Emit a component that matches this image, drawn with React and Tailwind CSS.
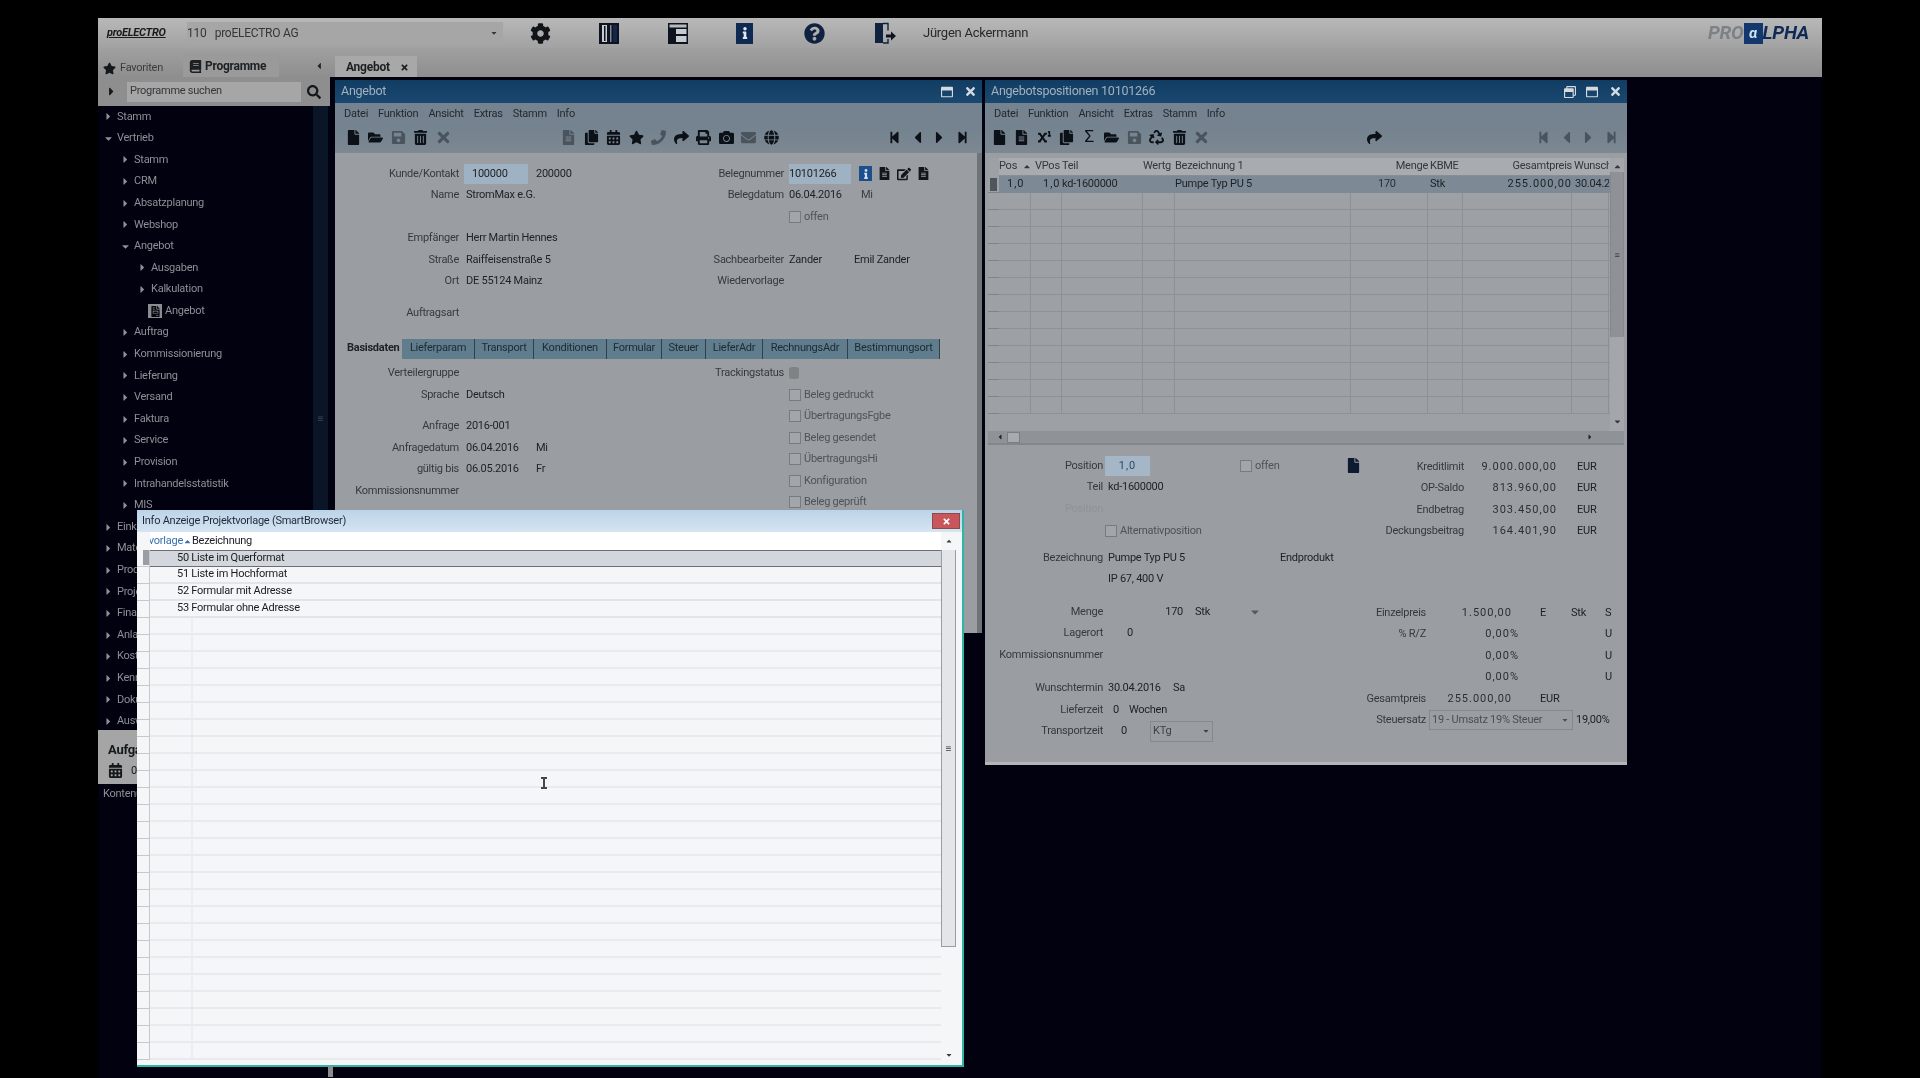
import {
  FaCog, FaInfo, FaQuestionCircle, FaStar, FaSearch, FaCaretRight, FaCaretDown, FaCaretLeft,
  FaCaretUp, FaFile, FaFolderOpen, FaSave, FaTrashAlt, FaTimes, FaFileAlt, FaCalendarAlt, FaPhone, FaPrint, FaEnvelope, FaGlobe,
  FaStepBackward, FaStepForward, FaShare, FaCopy, FaCamera, FaBook, FaFileInvoice, FaSuperscript, FaRegWindowRestore, FaRegWindowMaximize,
  FaEdit, FaRecycle,
} from 'react-icons/fa';

const tree = [
  [0, 'Stamm', 'r'], [0, 'Vertrieb', 'd'], [1, 'Stamm', 'r'], [1, 'CRM', 'r'], [1, 'Absatzplanung', 'r'], [1, 'Webshop', 'r'],
  [1, 'Angebot', 'd'], [2, 'Ausgaben', 'r'], [2, 'Kalkulation', 'r'], [2, 'Angebot', 'i'], [1, 'Auftrag', 'r'],
  [1, 'Kommissionierung', 'r'], [1, 'Lieferung', 'r'], [1, 'Versand', 'r'], [1, 'Faktura', 'r'], [1, 'Service', 'r'],
  [1, 'Provision', 'r'], [1, 'Intrahandelsstatistik', 'r'], [1, 'MIS', 'r'], [0, 'Einkauf', 'r'], [0, 'Material', 'r'],
  [0, 'Produktion', 'r'], [0, 'Projekt', 'r'], [0, 'Finanzen', 'r'], [0, 'Anlagen', 'r'], [0, 'Kosten', 'r'],
  [0, 'Kennzahlen', 'r'], [0, 'Dokumente', 'r'], [0, 'Auswertungen', 'r'],
];

const menus = ['Datei', 'Funktion', 'Ansicht', 'Extras', 'Stamm', 'Info'];
const tabs = [
  ['Lieferparam', 'w-[73px]'], ['Transport', 'w-[59px]'], ['Konditionen', 'w-[73px]'], ['Formular', 'w-[55px]'],
  ['Steuer', 'w-[44px]'], ['LieferAdr', 'w-[57px]'], ['RechnungsAdr', 'w-[85px]'], ['Bestimmungsort', 'w-[92px]'],
];
const gridCols = 'grid grid-cols-[32px_31px_81px_32px_176px_77px_35px_109px_37px] whitespace-nowrap';

const BookIcon = () => (
  <svg width="20" height="21" viewBox="0 0 20 21">
    <rect width="20" height="21" fill="#0d1420" />
    <rect x="3" y="2" width="5" height="17" fill="#c8ccd0" />
    <rect x="5" y="3" width="1.5" height="15" fill="#0d1420" />
    <rect x="11" y="2" width="1.5" height="17" fill="#7f8790" />
    <rect x="14" y="2" width="4" height="17" fill="#14264a" />
  </svg>
);

const LayoutIcon = () => (
  <svg width="20" height="21" viewBox="0 0 20 21">
    <rect width="20" height="21" fill="#0d1420" />
    <rect x="1.5" y="1.5" width="17" height="3" fill="#b7bbc0" />
    <rect x="1.5" y="6" width="5" height="13" fill="#0d1420" />
    <rect x="8" y="6" width="10.5" height="5" fill="#c8ccd0" />
    <rect x="8" y="13" width="10.5" height="6" fill="#c8ccd0" />
  </svg>
);

const ExitIcon = () => (
  <svg width="22" height="22" viewBox="0 0 22 22">
    <rect x="1" y="1" width="8" height="20" fill="#0f2240" />
    <path d="M9 1.5h5v7M14 17v4H9" fill="none" stroke="#0f2240" strokeWidth="1.4" />
    <path d="M12 12.5h5V9.5l5 4.5-5 4.5v-3h-5z" fill="#0d1420" />
  </svg>
);

const TreeRow = ({ level, label, kind }) => (
  <div className={`flex h-[21.6px] items-center text-[#8d9094] ${level === 0 ? 'pl-[5px]' : level === 1 ? 'pl-[22px]' : 'pl-[39px]'}`}>
    {kind === 'i' ? (
      <span className="ml-[11px] mr-[3px] flex h-[14px] w-[14px] items-center justify-center bg-[#8a8d90] text-[#05050f]">
        <FaFileInvoice size={11} />
      </span>
    ) : (
      <span className="flex w-[14px] justify-start">
        {kind === 'd' ? <FaCaretDown size={11} /> : <FaCaretRight size={11} />}
      </span>
    )}
    <span>{label}</span>
  </div>
);

const Tool = ({ icon: Icon, size = 15, dim }) => (
  <span className={`flex h-[20px] w-[22.5px] shrink-0 items-center justify-center ${dim ? 'text-[#4a545d]' : 'text-[#0c1118]'}`}>
    <Icon size={size} />
  </span>
);

const WindowHead = ({ title, restore }) => (
  <>
    <div className="flex h-[23px] items-center bg-gradient-to-b from-[#123d63] to-[#1a4870] pl-[6px] pr-[5px] text-[12.5px] text-[#a3b1bd]">
      <span className="flex-1">{title}</span>
      {restore && <FaRegWindowRestore size={12} className="mr-[10px] text-[#d4dae0]" />}
      <FaRegWindowMaximize size={12} className="mr-[11px] text-[#d4dae0]" />
      <FaTimes size={13} className="text-[#d4dae0]" />
    </div>
    <div className="flex h-[24px] items-center gap-[10px] bg-[#74838f] pb-[1px] pl-[9px] text-[#24292e]">
      {menus.map((m) => <span key={m}>{m}</span>)}
    </div>
  </>
);

const Check = ({ label }) => (
  <span className="flex items-center gap-[3px] text-[#4f5357]">
    <span className="h-[12px] w-[12px] border border-[#777b80] bg-[#a2a6aa]" />
    {label}
  </span>
);

const Row = ({ label, children, rlabel, right }) => (
  <div className="flex h-[21.5px] items-center">
    <div className="w-[124px] shrink-0 text-right text-[#36393c]">{label}</div>
    <div className="flex w-[206px] shrink-0 items-center pl-[7px]">{children}</div>
    <div className="w-[119px] shrink-0 text-right text-[#36393c]">{rlabel}</div>
    <div className="flex items-center pl-[5px]">{right}</div>
  </div>
);

const Label = ({ w, children }) => <span className={`${w} shrink-0 text-right text-[#36393c]`}>{children}</span>;

const PosRow = ({ label, children, dim }) => (
  <div className="flex h-[21.5px] items-center">
    <div className={`w-[118px] shrink-0 text-right ${dim ? 'text-[#8f9397]' : 'text-[#36393c]'}`}>{label}</div>
    <div className="flex flex-1 items-center pl-[5px]">{children}</div>
  </div>
);

const Amount = ({ label, value }) => (
  <div className="flex h-[21.5px] items-center">
    <Label w="w-[114px]">{label}</Label>
    <span className="w-[93px] text-right tracking-[1px] text-[#2c2f32]">{value}</span>
    <span className="ml-[20px]">EUR</span>
  </div>
);

const Price = ({ label, value, a, b, c, wide }) => (
  <div className="flex h-[21.5px] items-center">
    <Label w="w-[76px]">{label}</Label>
    <span className={`${wide ? 'w-[93px]' : 'w-[86px]'} shrink-0 text-right tracking-[1px] text-[#2c2f32]`}>{value}</span>
    <span className={`${wide ? 'w-[52px] pl-[21px]' : 'w-[59px] pl-[28px]'} shrink-0`}>{a}</span>
    <span className="w-[34px] shrink-0">{b}</span>
    <span>{c}</span>
  </div>
);

const Angebot = () => (
  <div className="flex h-[553px] w-[647px] shrink-0 flex-col overflow-hidden bg-[#9a9ea2] text-[#202326]">
    <WindowHead title="Angebot" />
    <div className="flex h-[26px] items-start bg-gradient-to-b from-[#74838f] to-[#7c8892] pl-[7px]">
      {[FaFile, FaFolderOpen].map((I, i) => <Tool key={i} icon={I} />)}
      <Tool icon={FaSave} dim />
      <Tool icon={FaTrashAlt} />
      <Tool icon={FaTimes} dim size={17} />
      <span className="w-[103px]" />
      <Tool icon={FaFileAlt} dim />
      <Tool icon={FaCopy} />
      <Tool icon={FaCalendarAlt} />
      <Tool icon={FaStar} />
      <Tool icon={FaPhone} dim />
      <Tool icon={FaShare} />
      <Tool icon={FaPrint} />
      <Tool icon={FaCamera} />
      <Tool icon={FaEnvelope} dim />
      <Tool icon={FaGlobe} />
      <span className="w-[101px]" />
      <Tool icon={FaStepBackward} size={13} />
      <Tool icon={FaCaretLeft} size={19} />
      <Tool icon={FaCaretRight} size={19} />
      <Tool icon={FaStepForward} size={13} />
    </div>
    <div className="flex flex-1 border-r-[5px] border-[#6f7478]">
      <div className="flex-1 pt-[10px]">
        <Row label="Kunde/Kontakt" rlabel="Belegnummer" right={
          <>
            <span className="h-[20px] w-[62px] bg-[#9fb2c3] leading-[20px]">10101266</span>
            <span className="ml-[8px] flex items-center gap-[6px]">
              <span className="flex h-[15px] w-[13px] items-center justify-center bg-[#1d4f8c] text-[#cfe0f0]"><FaInfo size={10} /></span>
              <FaFileAlt size={13} className="text-[#11161b]" />
              <FaEdit size={14} className="text-[#11161b]" />
              <FaFileAlt size={13} className="text-[#11161b]" />
            </span>
          </>
        }>
          <span className="-ml-[2px] h-[20px] w-[64px] bg-[#9fb2c3] pl-[8px] leading-[20px]">100000</span>
          <span className="ml-[8px]">200000</span>
        </Row>
        <Row label="Name" rlabel="Belegdatum" right={<><span className="w-[72px]">06.04.2016</span><span className="text-[#3a3e42]">Mi</span></>}>StromMax e.G.</Row>
        <Row right={<Check label="offen" />} />
        <Row label="Empfänger">Herr Martin Hennes</Row>
        <Row label="Straße" rlabel="Sachbearbeiter" right={<><span className="w-[65px]">Zander</span><span>Emil Zander</span></>}>Raiffeisenstraße 5</Row>
        <Row label="Ort" rlabel="Wiedervorlage">DE 55124 Mainz</Row>
        <div className="mt-[10px]"><Row label="Auftragsart" /></div>
        <div className="mt-[14px] flex h-[22px] items-center pl-[12px]">
          <span className="w-[55px] whitespace-nowrap font-bold text-[#202326]">Basisdaten</span>
          {tabs.map(([t, w]) => (
            <span key={t} className={`${w} flex h-[20px] items-center justify-center border-r border-[#33404a] bg-[#5f7d8c] text-[#1c2a33]`}>{t}</span>
          ))}
        </div>
        <div className="mt-[3px] flex">
          <div className="w-[449px] shrink-0">
            <Row label="Verteilergruppe" />
            <Row label="Sprache">Deutsch</Row>
            <div className="mt-[10px]"><Row label="Anfrage">2016-001</Row></div>
            <Row label="Anfragedatum"><span className="w-[70px]">06.04.2016</span><span>Mi</span></Row>
            <Row label="gültig bis"><span className="w-[70px]">06.05.2016</span><span>Fr</span></Row>
            <Row label="Kommissionsnummer" />
          </div>
          <div className="pl-[5px]">
            <div className="flex h-[21.5px] items-center">
              <span className="-ml-[125px] w-[120px] text-right text-[#36393c]">Trackingstatus</span>
              <span className="ml-[5px] h-[12px] w-[10px] rounded-[3px] bg-[#7f8386]" />
            </div>
            {['Beleg gedruckt', 'ÜbertragungsFgbe', 'Beleg gesendet', 'ÜbertragungsHi', 'Konfiguration', 'Beleg geprüft'].map((t) => (
              <div key={t} className="flex h-[21.5px] items-center"><Check label={t} /></div>
            ))}
          </div>
        </div>
      </div>
    </div>
  </div>
);

const Positionen = () => (
  <div className="flex h-[685px] w-[642px] shrink-0 flex-col overflow-hidden border-b-[3px] border-[#b3b6b9] bg-[#9a9ea2] text-[#202326]">
    <WindowHead title="Angebotspositionen 10101266" restore />
    <div className="flex h-[26px] items-start bg-gradient-to-b from-[#74838f] to-[#7c8892] pl-[3px]">
      <Tool icon={FaFile} /><Tool icon={FaFileAlt} /><Tool icon={FaSuperscript} size={13} /><Tool icon={FaCopy} />
      <span className="flex h-[20px] w-[22.5px] items-center justify-center text-[17px] text-[#0c1118]">Σ</span>
      <Tool icon={FaFolderOpen} /><Tool icon={FaSave} dim /><Tool icon={FaRecycle} /><Tool icon={FaTrashAlt} /><Tool icon={FaTimes} dim size={17} />
      <span className="w-[150px]" />
      <Tool icon={FaShare} />
      <span className="w-[147px]" />
      <Tool icon={FaStepBackward} size={13} dim /><Tool icon={FaCaretLeft} size={19} dim /><Tool icon={FaCaretRight} size={19} dim /><Tool icon={FaStepForward} size={13} dim />
    </div>
    <div className="mx-[3px] mt-[5px] flex h-[287px] flex-col border-b-2 border-[#82878b] bg-[#9da1a5]">
      <div className="flex flex-1">
        <div className="flex w-[11px] flex-col pt-[18px]">
          {Array.from({ length: 14 }, (_, i) => (
            <div key={i} className="h-[17px] border-b border-[#7e8387] pl-[2px]">
              {i === 0 && <span className="mt-[2px] block h-[13px] w-[7px] bg-[#4e555c]" />}
            </div>
          ))}
        </div>
        <div className="flex-1">
          <div className={`${gridCols} h-[18px] items-center border-b border-[#898d91] bg-[#a8acb0] text-[#33373b]`}>
            <span className="flex items-center gap-[6px]">Pos <FaCaretUp size={9} /></span>
            <span className="pl-[4px]">VPos</span>
            <span>Teil</span>
            <span>Wertg</span>
            <span>Bezeichnung 1</span>
            <span className="text-right">Menge</span>
            <span className="pl-[2px]">KBME</span>
            <span className="text-right">Gesamtpreis</span>
            <span className="overflow-hidden pl-[2px]">Wunscht</span>
          </div>
          <div className={`${gridCols} h-[17px] items-center bg-[#7d8a96] text-[#1d2023]`}>
            <span className="pl-[8px] tracking-[1px]">1,0</span>
            <span className="pl-[12px] tracking-[1px]">1,0</span>
            <span>kd-1600000</span>
            <span />
            <span>Pumpe Typ PU 5</span>
            <span className="pl-[27px] text-[#2c2f32]">170</span>
            <span className="pl-[2px]">Stk</span>
            <span className="text-right tracking-[1px]">255.000,00</span>
            <span className="overflow-hidden pl-[3px]">30.04.2016</span>
          </div>
          {Array.from({ length: 13 }, (_, i) => (
            <div key={i} className={`${gridCols} h-[17px] border-b border-[#8d9195]`}>
              {Array.from({ length: 9 }, (_, c) => <span key={c} className="border-r border-[#8d9195]" />)}
            </div>
          ))}
        </div>
        <div className="flex w-[14px] flex-col items-center bg-[#a3a7ab] text-[#33373b]">
          <FaCaretUp size={9} className="mt-[4px]" />
          <div className="mt-[1px] flex h-[165px] w-full flex-col items-center justify-center border-x border-[#85898d] bg-[#8e9296] text-[9px] leading-[4px]">≡</div>
          <div className="flex-1" />
          <FaCaretDown size={9} className="mb-[5px]" />
        </div>
      </div>
      <div className="flex h-[12px] items-center bg-[#8f9397] pl-[8px]">
        <FaCaretLeft size={8} />
        <span className="ml-[3px] h-[11px] w-[13px] border border-[#7a7e82] bg-[#a7abaf]" />
        <FaCaretRight size={8} className="ml-[566px]" />
      </div>
    </div>
    <div className="flex flex-1 pt-[10px]">
      <div className="w-[365px] shrink-0">
        <PosRow label="Position">
          <span className="-ml-[3px] h-[20px] w-[45px] bg-[#a5b6c6] text-center leading-[20px] tracking-[1px] text-[#2e4a66]">1,0</span>
          <span className="ml-[90px] w-[106px]"><Check label="offen" /></span>
          <FaFile size={15} className="text-[#0d1a30]" />
        </PosRow>
        <PosRow label="Teil">kd-1600000</PosRow>
        <PosRow label="Position" dim />
        <div className="mt-[1px]">
          <PosRow><span className="-ml-[3px]"><Check label="Alternativposition" /></span></PosRow>
        </div>
        <div className="mt-[5px]">
          <PosRow label="Bezeichnung"><span className="w-[172px]">Pumpe Typ PU 5</span><span>Endprodukt</span></PosRow>
        </div>
        <PosRow>IP 67, 400 V</PosRow>
        <div className="mt-[11px]">
          <PosRow label="Menge">
            <span className="w-[75px] text-right">170</span>
            <span className="ml-[12px] w-[54px]">Stk</span>
            <FaCaretDown size={12} className="text-[#555a5f]" />
          </PosRow>
        </div>
        <PosRow label="Lagerort"><span className="pl-[19px]">0</span></PosRow>
        <PosRow label="Kommissionsnummer" />
        <div className="mt-[12px]">
          <PosRow label="Wunschtermin"><span className="w-[65px]">30.04.2016</span><span>Sa</span></PosRow>
        </div>
        <PosRow label="Lieferzeit"><span className="pl-[5px]">0</span><span className="ml-[10px]">Wochen</span></PosRow>
        <PosRow label="Transportzeit">
          <span className="w-[42px] pl-[13px]">0</span>
          <span className="flex h-[21px] w-[63px] items-center justify-between border border-[#85898d] pl-[2px] pr-[2px] text-[#3e4246]">KTg <FaCaretDown size={8} /></span>
        </PosRow>
      </div>
      <div className="flex-1 pt-[1px]">
        <Amount label="Kreditlimit" value="9.000.000,00" />
        <Amount label="OP-Saldo" value="813.960,00" />
        <Amount label="Endbetrag" value="303.450,00" />
        <Amount label="Deckungsbeitrag" value="164.401,90" />
        <div className="mt-[60px]">
          <Price label="Einzelpreis" value="1.500,00" a="E" b="Stk" c="S" />
          <Price label="% R/Z" value="0,00%" c="U" wide />
          <Price value="0,00%" c="U" wide />
          <Price value="0,00%" c="U" wide />
          <Price label="Gesamtpreis" value="255.000,00" a="EUR" />
          <div className="flex h-[21.5px] items-center">
            <Label w="w-[76px]">Steuersatz</Label>
            <span className="ml-[3px] flex h-[20px] w-[144px] items-center justify-between border border-[#85898d] pl-[2px] pr-[3px] text-[#4b4f53]">19 - Umsatz 19% Steuer <FaCaretDown size={8} /></span>
            <span className="ml-[3px]">19,00%</span>
          </div>
        </div>
      </div>
    </div>
  </div>
);

const Dialog = () => (
  <div className="absolute left-[39px] top-[492px] flex h-[557px] w-[827px] flex-col overflow-hidden border-b-2 border-r-2 border-[#2fb5a8] bg-[#f5f6f8] text-[#1a1c1f]">
    <div className="flex h-[22px] shrink-0 items-center bg-gradient-to-b from-[#bcd3e8] to-[#d5e4f1] pl-[5px] text-[#1d2a38]">
      <span className="flex-1">Info Anzeige Projektvorlage (SmartBrowser)</span>
      <span className="mr-[2px] flex h-[16px] w-[28px] items-center justify-center border border-[#8c4a4a] bg-[#c9565a] text-white"><FaTimes size={9} /></span>
    </div>
    <div className="flex min-h-0 flex-1 pr-[6px]">
      <div className="w-[13px] shrink-0 overflow-hidden pt-[18px]">
        {Array.from({ length: 30 }, (_, i) => (
          <div key={i} className="h-[17px] border-b border-r border-[#c6c8cc]">
            {i === 0 && <span className="ml-[6px] block h-[15px] w-[6px] bg-[#9a9ea3]" />}
          </div>
        ))}
      </div>
      <div className="min-w-0 flex-1 overflow-hidden">
        <div className="flex h-[18px] items-center bg-white">
          <span className="w-[33px] overflow-hidden whitespace-nowrap text-right text-[#3b6fae]" dir="rtl">vorlage</span>
          <FaCaretUp size={9} className="text-[#3b6fae]" />
          <span>Bezeichnung</span>
        </div>
        {['50 Liste im Querformat', '51 Liste im Hochformat', '52 Formular mit Adresse', '53 Formular ohne Adresse'].map((t, i) => (
          <div key={t} className={`flex h-[17px] items-center pl-[27px] ${i === 0 ? 'border-y border-[#6b7077] bg-[#d3d7dd]' : 'border-b-2 border-[#e2e4e8]'}`}>{t}</div>
        ))}
        {Array.from({ length: 26 }, (_, i) => (
          <div key={i} className="h-[17px] border-b-2 border-[#e8eaed]">
            <div className="ml-[41px] h-full border-l-2 border-[#ebedf0]" />
          </div>
        ))}
      </div>
      <div className="flex w-[15px] shrink-0 flex-col items-center text-[#3a3d40]">
        <div className="flex h-[18px] items-center"><FaCaretUp size={8} /></div>
        <div className="flex h-[397px] w-full items-center justify-center border-x border-b border-[#9a9da1] bg-[#e4e5e8] text-[10px]">≡</div>
        <div className="flex-1" />
        <FaCaretDown size={8} className="mb-[6px]" />
      </div>
    </div>
    <span className="absolute left-[404px] top-[267px] h-[12px] w-[6px] border-y-2 border-[#44484d]">
      <span className="mx-auto block h-full w-[2px] bg-[#44484d]" />
    </span>
  </div>
);

export default function App() {
  return (
    <div className="h-[1078px] w-[1920px] overflow-hidden bg-black pl-[98px] pt-[18px] font-['Roboto',sans-serif] text-[11px] tracking-[-0.25px] blur-[0.5px]">
      <div className="relative flex h-[1060px] w-[1724px] flex-col bg-[#01010f]">
        <div className="flex h-[30px] shrink-0 items-center bg-gradient-to-b from-[#b8b8b8] to-[#a2a2a2] text-[#1a1a1a]">
          <span className="ml-[9px] w-[80px] text-[11px] font-bold italic underline">proELECTRO</span>
          <span className="flex h-[22px] w-[316px] items-center justify-between bg-[#a6a6a6] pr-[5px] text-[12px] text-[#33363a]">
            <span>110&nbsp;&nbsp; proELECTRO AG</span>
            <FaCaretDown size={8} />
          </span>
          <span className="ml-[27px] flex items-center text-[#101418]">
            <span className="flex w-[69px]"><FaCog size={21} /></span>
            <span className="flex w-[69px]"><BookIcon /></span>
            <span className="flex w-[68px]"><LayoutIcon /></span>
            <span className="flex w-[68px]">
              <span className="flex h-[21px] w-[17px] items-center justify-center bg-[#0f2a50] text-[#e3e8ee]"><FaInfo size={12} /></span>
            </span>
            <span className="flex w-[70px]"><FaQuestionCircle size={21} className="text-[#0f2240]" /></span>
            <span className="flex w-[49px]"><ExitIcon /></span>
          </span>
          <span className="text-[13px] text-[#26292c]">Jürgen Ackermann</span>
          <span className="ml-auto mr-[13px] flex h-[24px] items-center text-[19px] font-bold italic">
            <span className="text-[#7d8084]">PRO</span>
            <span className="flex h-[21px] w-[19px] items-center justify-center bg-[#12386e] text-[15px] text-[#cfe0f0]">α</span>
            <span className="text-[#0f2a55]">LPHA</span>
          </span>
        </div>
        <div className="flex min-h-0 flex-1">
          <div className="flex w-[232px] shrink-0 flex-col">
            <div className="flex h-[29px] items-end bg-gradient-to-b from-[#a0a0a0] to-[#8e8e8e] pl-[5px] pr-[6px]">
              <span className="flex h-[20px] w-[80px] items-center gap-[4px] pt-[2px] text-[#3a3c3e]"><FaStar size={13} className="text-[#15181b]" />Favoriten</span>
              <span className="flex h-[24px] w-[96px] items-center gap-[3px] bg-[#9a9a9a] pl-[6px] pt-[2px] text-[12px] font-bold text-[#1d2023]"><FaBook size={13} />Programme</span>
              <FaCaretLeft size={10} className="mb-[6px] ml-auto text-[#222]" />
            </div>
            <div className="flex h-[29px] items-center bg-[#8e8e8e] pl-[7px] text-[#15181b]">
              <FaCaretRight size={13} />
              <span className="ml-[9px] flex h-[20px] w-[174px] items-center bg-[#a6a6a6] pl-[3px] text-[#33363a]">Programme suchen</span>
              <FaSearch size={14} className="ml-[6px]" />
            </div>
            <div className="relative h-[624px] overflow-hidden">
              <div className="mr-[17px]">
                {tree.map(([level, label, kind], i) => <TreeRow key={i} level={level} label={label} kind={kind} />)}
              </div>
              <div className="absolute bottom-0 right-[2px] top-0 flex w-[15px] items-center justify-center bg-[#0b1528] text-[10px] text-[#3c4a5c]">≡</div>
            </div>
            <div className="h-[54px] bg-[#a5a5a5] pl-[10px] pt-[10px] text-[#15181b]">
              <div className="text-[13px] font-bold">Aufgaben</div>
              <div className="mt-[3px] flex items-center gap-[8px]"><FaCalendarAlt size={15} />04.04.2016</div>
            </div>
            <div className="flex h-[21px] items-center pl-[5px] text-[#8d9094]">Kontenübersicht</div>
          </div>
          <div className="flex min-w-0 flex-1 flex-col">
            <div className="flex h-[29px] shrink-0 items-end bg-gradient-to-b from-[#a0a0a0] to-[#8e8e8e] pl-[5px]">
              <span className="flex h-[21px] w-[82px] items-center gap-[10px] bg-[#a8a8a8] pl-[11px] pt-[1px] text-[12px] font-bold text-[#1d2023]">Angebot <FaTimes size={9} /></span>
            </div>
            <div className="flex gap-[3px] pl-[5px] pt-[3px]">
              <Angebot />
              <Positionen />
            </div>
          </div>
        </div>
        <Dialog />
        <span className="absolute left-[230px] top-[1048px] h-[11px] w-[5px] bg-[#8a8d90]" />
      </div>
    </div>
  );
}
